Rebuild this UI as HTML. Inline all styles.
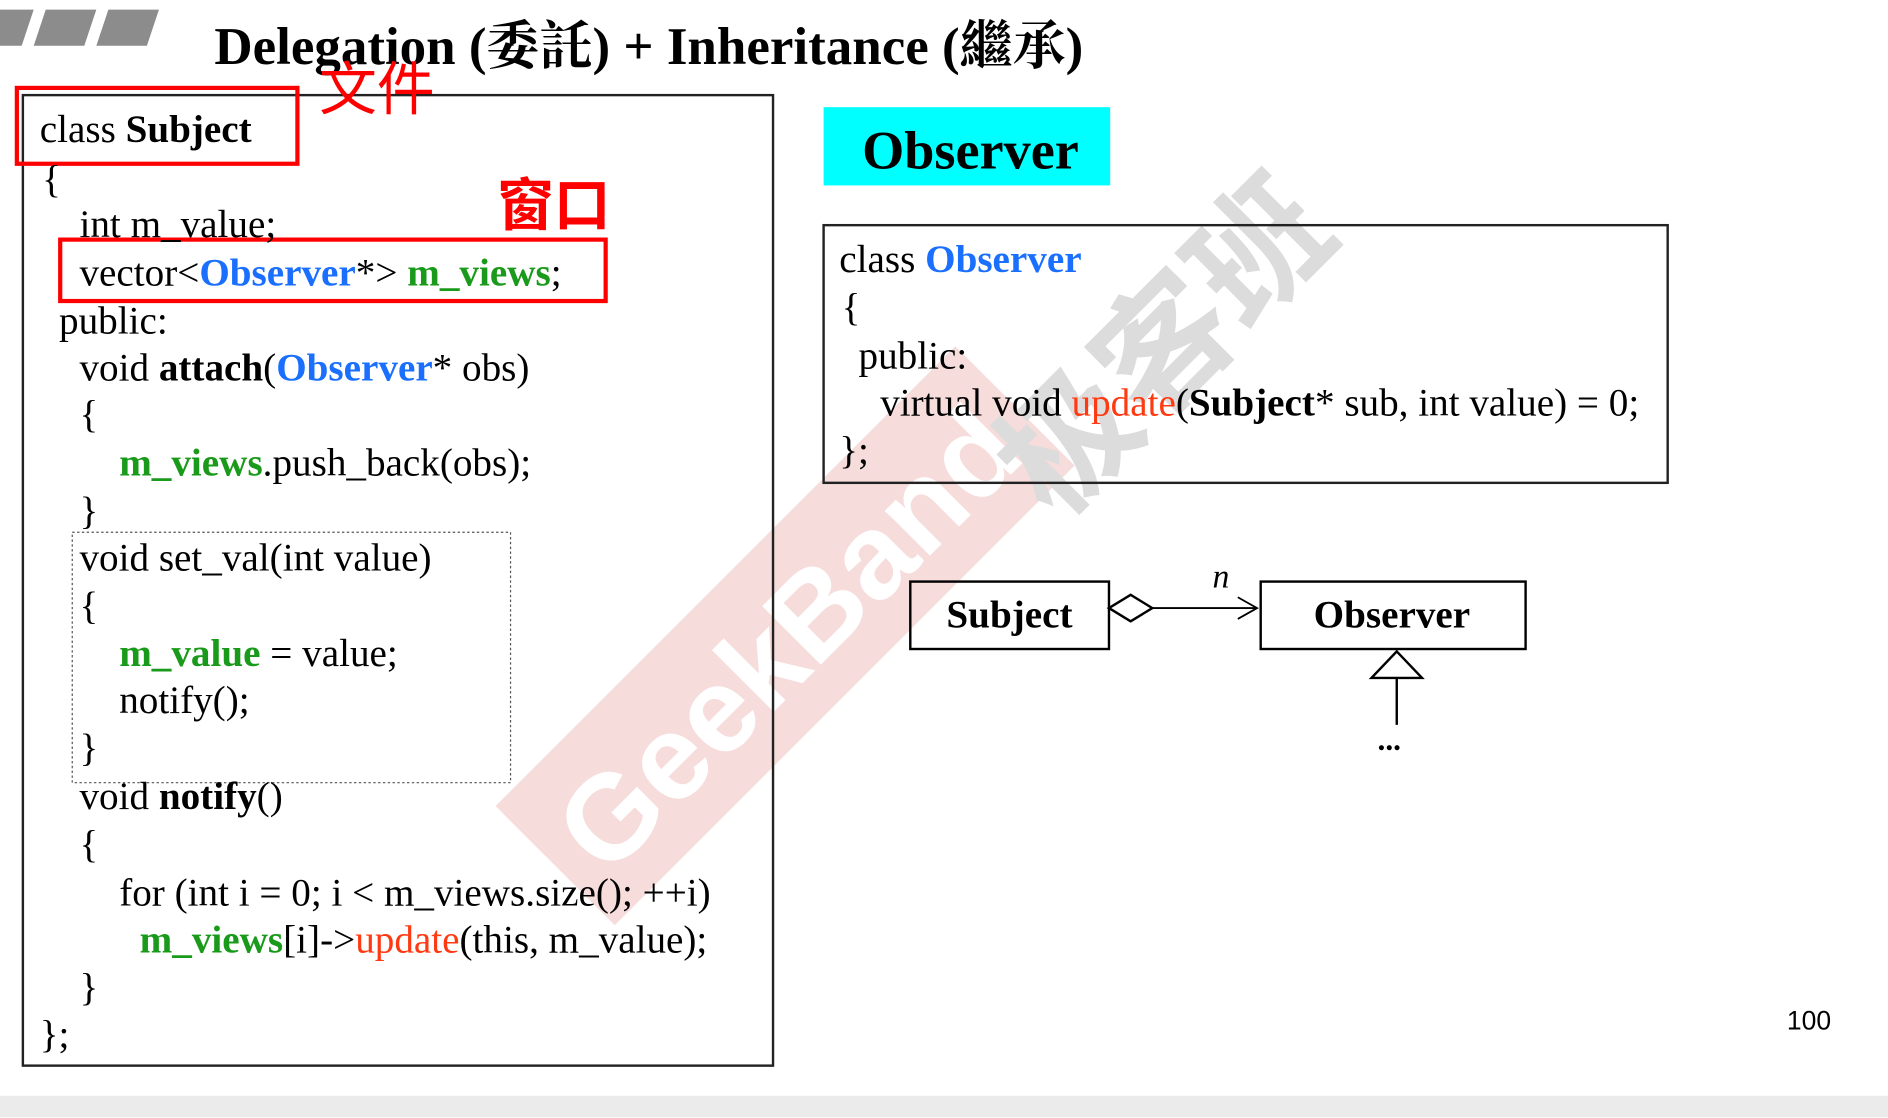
<!DOCTYPE html>
<html><head><meta charset="utf-8"><style>
html,body{margin:0;padding:0;background:#fff;width:1888px;height:1118px;overflow:hidden}
#s{position:absolute;left:0;top:0;width:1568px;height:928px;transform:scale(1.2041);transform-origin:0 0;font-family:"Liberation Serif","Noto Serif CJK SC",serif;color:#000}
.a{position:absolute;white-space:nowrap}
.c{font-size:32.5px;line-height:1}
.b{font-weight:bold}
.bl{color:#1a6fff;font-weight:bold}
.g{color:#1a9a1a;font-weight:bold}
.r{color:#ff3a12}
</style></head><body><div id="s">
<svg class="a" style="left:0;top:0" width="1568" height="928">
<g fill="#8c8c8c"><polygon points="0,8 28,8 18,38 0,38"/><polygon points="38,8 80,8 70,38 28,38"/><polygon points="90,8 132,8 122,38 80,38"/></g>
<g transform="translate(652,528) rotate(-45)"><rect x="-270" y="-70" width="540" height="140" fill="#f7dcdc"/>
<text x="0" y="38" text-anchor="middle" font-family="Liberation Sans,sans-serif" font-weight="bold" font-size="100" fill="#fff">GeekBand</text></g>
<text transform="translate(995,315) rotate(-45)" text-anchor="middle" font-family="Noto Sans CJK SC,sans-serif" font-weight="bold" font-size="112" fill="#dcdcdc">极客班</text>
<rect x="19" y="79" width="623" height="806" fill="none" stroke="#222" stroke-width="2"/>
<rect x="60" y="442" width="364" height="208" fill="none" stroke="#555" stroke-width="1" stroke-dasharray="2,2"/>
<rect x="684" y="187" width="701" height="214" fill="none" stroke="#222" stroke-width="2"/>
<rect x="684" y="89" width="238" height="65" fill="#00ffff"/>
<rect x="756" y="483" width="165" height="56" fill="none" stroke="#000" stroke-width="2"/>
<rect x="1047" y="483" width="220" height="56" fill="none" stroke="#000" stroke-width="2"/>
<polygon points="921,505 939,494 957,505 939,516" fill="#fff" stroke="#000" stroke-width="2"/>
<line x1="957" y1="505" x2="1044" y2="505" stroke="#000" stroke-width="1.5"/>
<polyline points="1028,496 1044,505 1028,514" fill="none" stroke="#000" stroke-width="1.5"/>
<polygon points="1160,541 1181,563 1139,563" fill="#fff" stroke="#000" stroke-width="2"/>
<line x1="1160" y1="563" x2="1160" y2="602" stroke="#000" stroke-width="2"/>
<rect x="14" y="73" width="233" height="63" fill="none" stroke="#ff0000" stroke-width="3.5"/>
<rect x="50" y="199" width="453" height="51" fill="none" stroke="#ff0000" stroke-width="3.5"/>
<rect x="0" y="910" width="1568" height="18" fill="#ebebeb"/>
</svg>
<div class="a b" style="left:178px;top:2px;font-size:44px">Delegation (<span style="font-family:'Noto Serif CJK TC','Noto Serif CJK SC',serif">委託</span>) + Inheritance (<span style="font-family:'Noto Serif CJK TC','Noto Serif CJK SC',serif">繼承</span>)</div>
<div class="a" style="left:265px;top:44px;font-size:48px;color:#ff0000;font-family:'Noto Sans CJK SC',sans-serif;line-height:1.1">文件</div>
<div class="a b" style="left:413px;top:141px;font-size:47px;color:#ff0000;font-family:'Noto Sans CJK SC',sans-serif;line-height:1.1">窗口</div>
<div class="a c" style="left:33px;top:92px">class <b>Subject</b></div>
<div class="a c" style="left:35px;top:134px">{</div>
<div class="a c" style="left:66px;top:171px">int m_value;</div>
<div class="a c" style="left:66px;top:211px">vector&lt;<span class="bl">Observer</span>*&gt; <span class="g">m_views</span>;</div>
<div class="a c" style="left:49px;top:251px">public:</div>
<div class="a c" style="left:66px;top:290px">void <b>attach</b>(<span class="bl">Observer</span>* obs)</div>
<div class="a c" style="left:66px;top:329px">{</div>
<div class="a c" style="left:99px;top:369px"><span class="g">m_views</span>.push_back(obs);</div>
<div class="a c" style="left:66px;top:409px">}</div>
<div class="a c" style="left:66px;top:448px">void set_val(int value)</div>
<div class="a c" style="left:66px;top:488px">{</div>
<div class="a c" style="left:99px;top:527px"><span class="g">m_value</span> = value;</div>
<div class="a c" style="left:99px;top:566px">notify();</div>
<div class="a c" style="left:66px;top:606px">}</div>
<div class="a c" style="left:66px;top:646px">void <b>notify</b>()</div>
<div class="a c" style="left:66px;top:686px">{</div>
<div class="a c" style="left:99px;top:726px">for (int i = 0; i &lt; m_views.size(); ++i)</div>
<div class="a c" style="left:116px;top:765px"><span class="g">m_views</span>[i]-&gt;<span class="r">update</span>(this, m_value);</div>
<div class="a c" style="left:66px;top:805px">}</div>
<div class="a c" style="left:33px;top:844px">};</div>
<div class="a b" style="left:716px;top:99px;font-size:45px">Observer</div>
<div class="a c" style="left:697px;top:200px">class <span class="bl">Observer</span></div>
<div class="a c" style="left:699px;top:240px">{</div>
<div class="a c" style="left:713px;top:280px">public:</div>
<div class="a c" style="left:731px;top:319px">virtual void <span class="r">update</span>(<b>Subject</b>* sub, int value) = 0;</div>
<div class="a c" style="left:697px;top:359px">};</div>
<div class="a b" style="left:786px;top:493px;font-size:32.5px">Subject</div>
<div class="a b" style="left:1091px;top:493px;font-size:32.5px">Observer</div>
<div class="a" style="left:1007px;top:464px;font-size:28px;font-style:italic">n</div>
<div class="a b" style="left:1144px;top:600px;font-size:26px">...</div>
<div class="a" style="left:1484px;top:835px;font-size:22px;font-family:'Liberation Sans',sans-serif">100</div>
</div></body></html>
